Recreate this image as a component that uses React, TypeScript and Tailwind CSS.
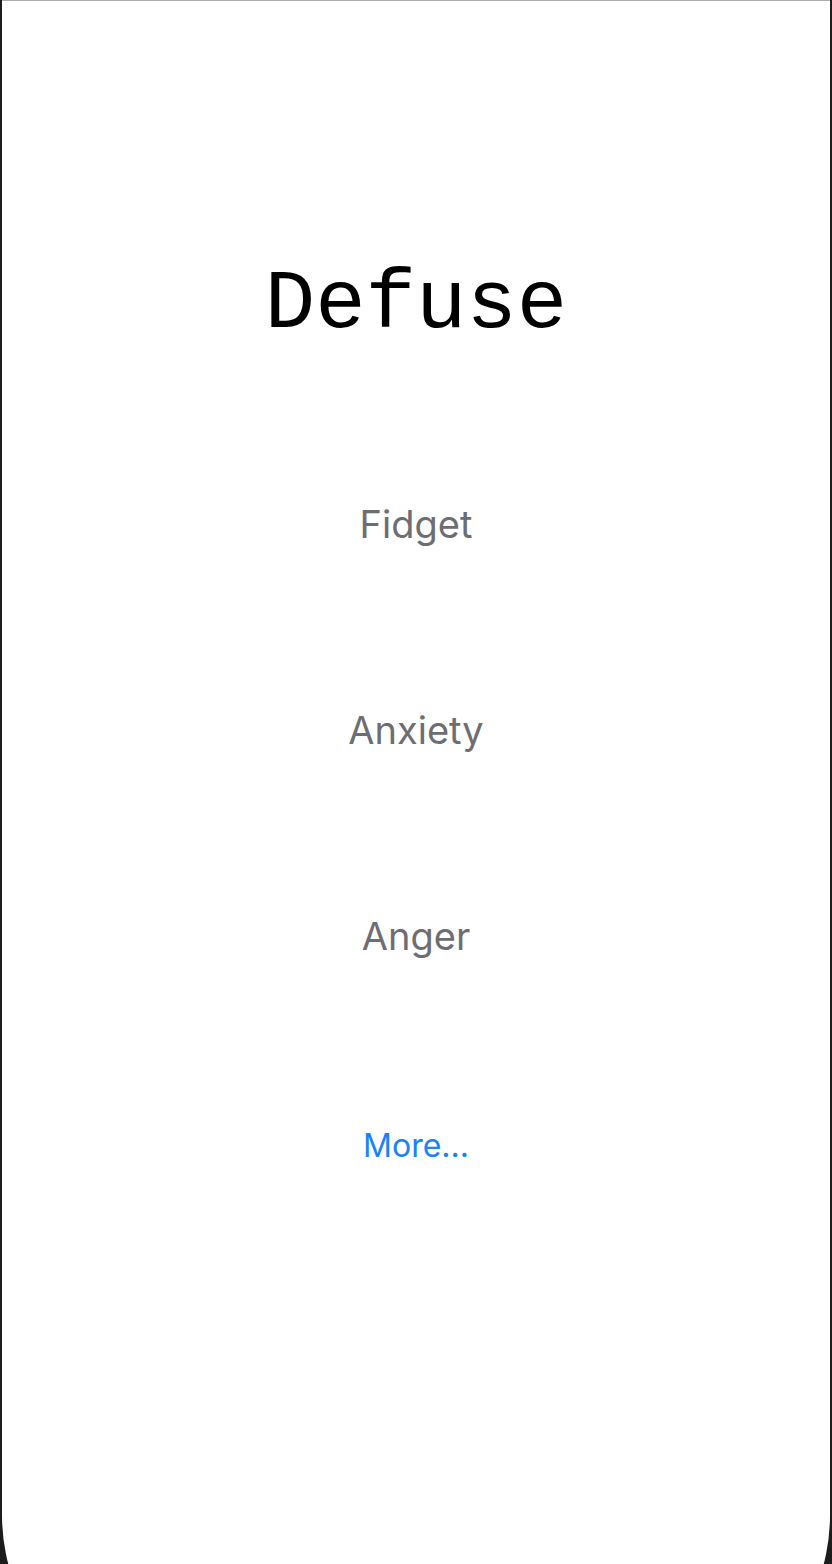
export default function App() {
  const items = ['Fidget', 'Anxiety', 'Anger']

  return (
    <div className="h-[1564px] overflow-hidden bg-[#1c1c1c] px-[2px]">
      <div className="flex h-[1710px] flex-col items-center rounded-b-[195px] border-t border-[#adadad] bg-white pt-[262px]">
        <h1 className="font-['Courier_New','Liberation_Mono',monospace] text-[84px] leading-none text-black">
          Defuse
        </h1>
        <div className="mt-[158px] flex flex-col items-center gap-[168px]">
          {items.map((item) => (
            <button
              key={item}
              type="button"
              className="font-['Inter',sans-serif] text-[38px] leading-none text-[#6d6d72]"
            >
              {item}
            </button>
          ))}
        </div>
        <button
          type="button"
          className="mt-[175px] font-['Inter',sans-serif] text-[32px] leading-none text-[#1a82fb]"
        >
          More...
        </button>
      </div>
    </div>
  )
}
